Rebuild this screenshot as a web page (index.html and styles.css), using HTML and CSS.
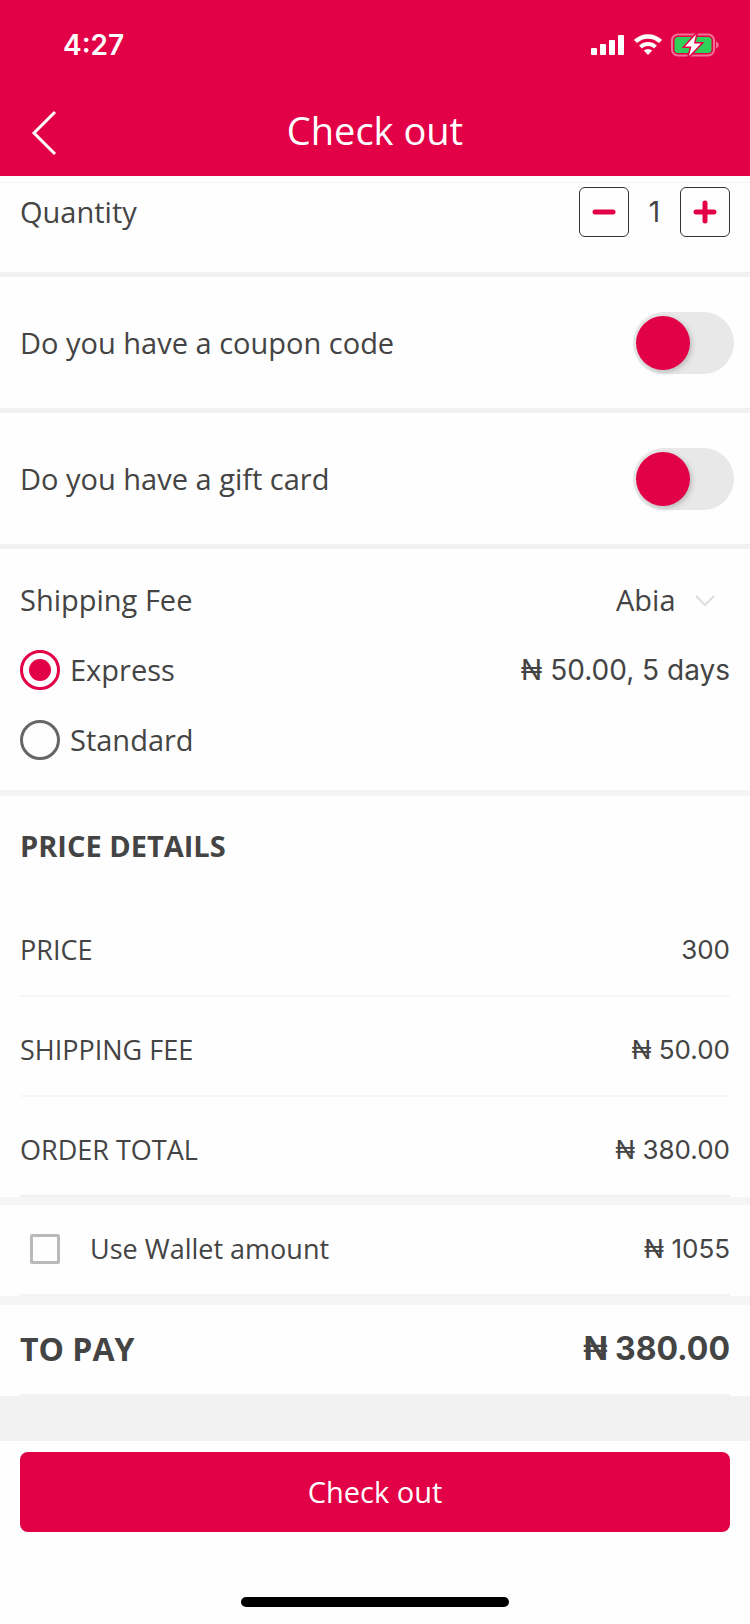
FILE: index.html
```html
<!DOCTYPE html>
<html lang="en">
<head>
  <meta charset="utf-8">
  <meta name="viewport" content="width=device-width, initial-scale=1">
  <title>Check out</title>
  <link rel="stylesheet" href="styles.css">
</head>
<body>
  <header class="header">
    <div class="status">
      <span class="status-time">4:27</span>
      <div class="status-icons">
        <svg class="signal" width="34" height="22" viewBox="0 0 34 22" aria-hidden="true">
          <rect x="0" y="14" width="6" height="7" rx="1"/>
          <rect x="9" y="10" width="6" height="11" rx="1"/>
          <rect x="18" y="6" width="6" height="15" rx="1"/>
          <rect x="27" y="1" width="6" height="20" rx="1"/>
        </svg>
        <svg class="wifi" width="28" height="22" viewBox="0 0 28 22" aria-hidden="true">
          <path d="M1.5 7.5a18 18 0 0 1 25 0" fill="none" stroke="#fff" stroke-width="4.500"/>
          <path d="M6.5 13a11 11 0 0 1 15 0" fill="none" stroke="#fff" stroke-width="4"/>
          <path d="M14 21l-4.2-4.4a6 6 0 0 1 8.400 0z" fill="#fff"/>
        </svg>
        <svg class="battery" width="48" height="24" viewBox="0 0 48 24" aria-hidden="true">
          <rect x="1" y="1.500" width="42" height="21" rx="6" fill="none" stroke="#ef7295" stroke-width="2"/>
          <rect x="3.500" y="4" width="37" height="16" rx="3.500" fill="#30d158"/>
          <path d="M45 8.500c2 .8 2.600 2 2.600 3.500s-.6 2.700-2.600 3.500z" fill="#ef7295"/>
          <path d="M25 1.500L14 13.500h6.500L18 23l12-12.500h-7z" fill="#fff" stroke="#e20046" stroke-width="3"/>
          <path d="M25 1.500L14 13.500h6.500L18 23l12-12.500h-7z" fill="#fff"/>
        </svg>
      </div>
    </div>
    <div class="nav">
      <button class="back" type="button" aria-label="Back">
        <svg width="26" height="46" viewBox="0 0 26 46" aria-hidden="true">
          <path d="M24 2L3 23l21 21" fill="none" stroke="#fff" stroke-width="3"/>
        </svg>
      </button>
      <h1 class="title">Check out</h1>
    </div>
  </header>

  <main class="content">
    <section class="quantity">
      <span>Quantity</span>
      <div class="stepper">
        <button class="step" type="button" aria-label="Decrease quantity">
          <svg width="24" height="24" viewBox="0 0 24 24" aria-hidden="true"><path d="M3 12h18"/></svg>
        </button>
        <output class="count">1</output>
        <button class="step" type="button" aria-label="Increase quantity">
          <svg width="24" height="24" viewBox="0 0 24 24" aria-hidden="true"><path d="M3 12h18M12 3v18"/></svg>
        </button>
      </div>
    </section>

    <section class="option">
      <label for="coupon">Do you have a coupon code</label>
      <input class="toggle" id="coupon" type="checkbox" role="switch">
    </section>
    <section class="option">
      <label for="gift">Do you have a gift card</label>
      <input class="toggle" id="gift" type="checkbox" role="switch">
    </section>

    <section class="shipping">
      <div class="line">
        <label for="state">Shipping Fee</label>
        <div class="picker">
          <select class="picker-select" id="state"><option>Abia</option></select>
          <svg class="picker-arrow" width="20" height="12" viewBox="0 0 20 12" aria-hidden="true">
            <path d="M1 1l9 9 9-9" fill="none" stroke="#dedede" stroke-width="2"/>
          </svg>
        </div>
      </div>
      <div class="line">
        <label class="choice"><input class="radio" type="radio" name="method" checked>Express</label>
        <span class="rate">₦ 50.00, 5 days</span>
      </div>
      <div class="line">
        <label class="choice"><input class="radio" type="radio" name="method">Standard</label>
      </div>
    </section>

    <section class="prices">
      <h2 class="heading">PRICE DETAILS</h2>
      <dl class="list">
        <div class="price"><dt>PRICE</dt><dd class="amount">300</dd></div>
        <div class="price"><dt>SHIPPING FEE</dt><dd class="amount">₦ 50.00</dd></div>
        <div class="price"><dt>ORDER TOTAL</dt><dd class="amount">₦ 380.00</dd></div>
      </dl>
    </section>

    <section class="summary">
      <div class="total">
        <label class="wallet"><input class="check" type="checkbox">Use Wallet amount</label>
        <span class="amount">₦ 1055</span>
      </div>
    </section>
    <section class="summary">
      <div class="total total-due"><span>TO PAY</span><span class="due">₦ 380.00</span></div>
    </section>
  </main>

  <footer class="footer">
    <button class="submit" type="button">Check out</button>
    <div class="home"></div>
  </footer>
</body>
</html>
```
FILE: styles.css
```css
* {
  box-sizing: border-box;
}

body {
  margin: 0;
  min-height: 100vh;
  display: flex;
  flex-direction: column;
  background: #fefefe;
  color: #444;
  font: 29px/40px "Open Sans", "Noto Sans", sans-serif;
}

button,
select {
  font: inherit;
  color: inherit;
  padding: 0;
  border: 0;
  background: none;
}

input {
  appearance: none;
  margin: 0;
  flex: none;
}

.header {
  background: #e20046;
  color: #fff;
}

.status {
  display: flex;
  align-items: center;
  justify-content: space-between;
  height: 90px;
  padding: 0 31px 0 63px;
}

.status-time {
  font: 600 28px/40px Inter, sans-serif;
}

.status-icons {
  display: flex;
  align-items: center;
  gap: 9px;
}

.signal {
  fill: #fff;
}

.nav {
  display: grid;
  grid-template-columns: 57px 1fr 57px;
  align-items: center;
  height: 86px;
}

.back {
  display: flex;
  justify-content: flex-end;
}

.title {
  margin: 0;
  padding-bottom: 6px;
  font-size: 38px;
  font-weight: 400;
  line-height: 48px;
  text-align: center;
}

.content {
  flex: 1;
  padding-top: 6px;
  background: linear-gradient(#fefefe 50%, #f2f2f2 50%);
}

.quantity,
.option,
.line,
.price,
.total {
  display: flex;
  align-items: center;
  justify-content: space-between;
}

.quantity {
  padding: 4px 20px 35px;
  border-top: 1px solid #f3f3f3;
  border-bottom: 5px solid #f1f1f1;
  background: #fefefe;
}

.stepper {
  display: flex;
  align-items: center;
}

.step {
  display: flex;
  align-items: center;
  justify-content: center;
  width: 50px;
  height: 50px;
  border: 1px solid #333;
  border-radius: 6px;
}

.step path {
  fill: none;
  stroke: #e20046;
  stroke-width: 5;
  stroke-linecap: round;
}

.count {
  width: 51px;
  text-align: center;
}

.count,
.rate,
.amount,
.due {
  font-family: Inter, "Open Sans", sans-serif;
}

.count,
.rate {
  font-size: 28px;
}

.amount {
  font-size: 26px;
}

.option {
  padding: 35px 16px 34px 20px;
  border-bottom: 5px solid #f1f1f1;
  background: #fefefe;
}

.toggle {
  width: 101px;
  height: 62px;
  padding: 4px 3px;
  border-radius: 31px;
  background: #e8e8e8;
}

.toggle::before {
  content: "";
  display: block;
  width: 54px;
  height: 54px;
  border-radius: 50%;
  background: #e20046;
  box-shadow: 2px 2px 5px #bbb;
}

.toggle:checked::before {
  margin-left: auto;
}

.shipping {
  padding: 16px 20px 15px;
  border-bottom: 6px solid #f5f5f5;
  background: #fefefe;
}

.line {
  height: 70px;
}

.picker {
  position: relative;
}

.picker-select {
  appearance: none;
  padding-right: 54px;
}

.picker-arrow {
  position: absolute;
  top: 15px;
  right: 15px;
  pointer-events: none;
}

.choice {
  display: flex;
  align-items: center;
  gap: 10px;
}

.radio {
  display: grid;
  place-items: center;
  width: 40px;
  height: 40px;
  border: 3px solid #666;
  border-radius: 50%;
}

.radio:checked {
  border-color: #e20046;
}

.radio:checked::before {
  content: "";
  width: 22px;
  height: 22px;
  border-radius: 50%;
  background: #e20046;
}

.prices {
  border-bottom: 8px solid #f5f5f5;
  background: #fefefe;
}

.heading {
  margin: 0;
  padding: 30px 20px 31px;
  font-size: 29px;
  line-height: 40px;
}

.list {
  margin: 0;
  padding: 0 20px;
  font-size: 27px;
}

.price {
  padding: 33px 0 25px;
  border-bottom: 2px solid #f6f6f6;
}

.price:last-child {
  border-color: #f0f0f0;
}

.price dd {
  margin: 0;
}

.summary {
  padding: 0 20px;
  border-bottom: 9px solid #f5f5f5;
  background: #fefefe;
  font-size: 27px;
}

.summary:last-child {
  border: 0;
}

.total {
  padding: 24px 0 25px;
  border-bottom: 2px solid #f3f3f3;
}

.total-due {
  font-size: 32px;
  font-weight: 700;
}

.wallet {
  display: flex;
  align-items: center;
  gap: 30px;
  padding-left: 10px;
}

.check {
  width: 30px;
  height: 30px;
  border: 3px solid #b9b9b9;
  border-radius: 2px;
}

.check:checked {
  background: #e20046;
}

.footer {
  padding: 11px 20px 17px;
}

.submit {
  width: 100%;
  height: 80px;
  border-radius: 8px;
  background: #e20046;
  color: #fff;
}

.home {
  width: 268px;
  height: 10px;
  margin: 65px auto 0;
  border-radius: 5px;
  background: #000;
}
```
